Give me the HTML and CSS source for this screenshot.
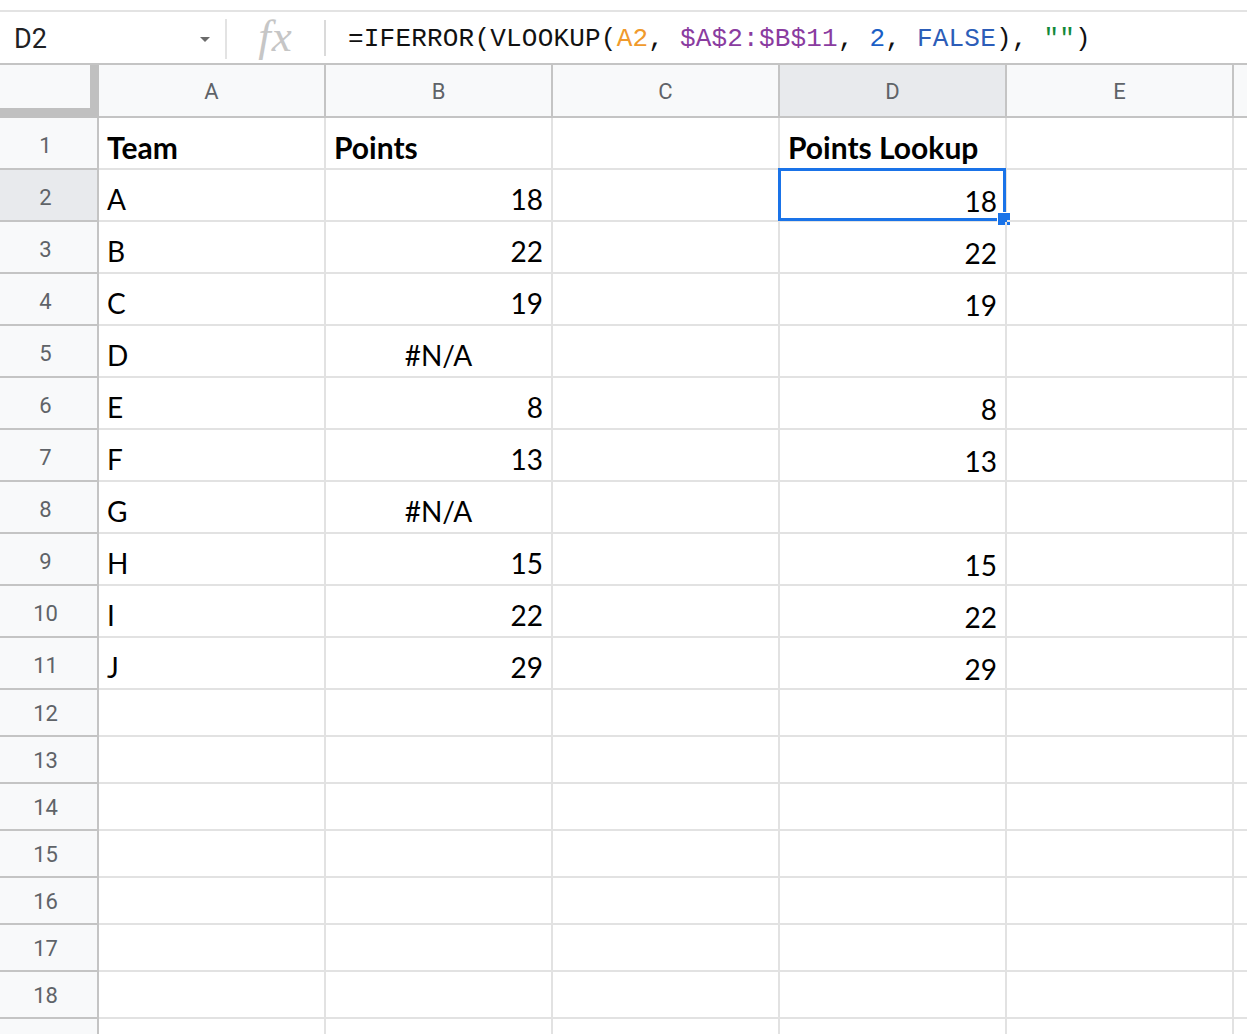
FILE: index.html
```html
<!DOCTYPE html>
<html lang="en">
<head>
  <meta charset="UTF-8" />
  <title>Points Lookup - Sheet</title>
  <link rel="stylesheet" href="styles.css">
</head>
<body>
  <div class="formula-bar">
    <div class="name-box">
      <span class="cell-ref">D2</span>
      <span class="caret"></span>
    </div>
    <div class="fx-box"><span class="fx">fx</span></div>
    <div class="formula">=IFERROR(VLOOKUP(<span class="ref-a">A2</span>, <span class="ref-range">$A$2:$B$11</span>, <span class="num">2</span>, <span class="bool">FALSE</span>), <span class="str">""</span>)</div>
  </div>

  <div class="sheet">
    <div class="corner"></div>
    <div class="col-head">A</div>
    <div class="col-head">B</div>
    <div class="col-head">C</div>
    <div class="col-head selected">D</div>
    <div class="col-head">E</div>
    <div class="col-head last"></div>

    <div class="row-head">1</div>
    <div class="cell bold">Team</div><div class="cell bold">Points</div><div class="cell"></div><div class="cell bold">Points Lookup</div><div class="cell"></div><div class="cell last"></div>

    <div class="row-head selected">2</div>
    <div class="cell">A</div><div class="cell num">18</div><div class="cell"></div>
    <div class="cell num low active">18<span class="sel-box"></span><span class="fill-handle"></span></div>
    <div class="cell"></div><div class="cell last"></div>

    <div class="row-head">3</div>
    <div class="cell">B</div><div class="cell num">22</div><div class="cell"></div><div class="cell num low">22</div><div class="cell"></div><div class="cell last"></div>

    <div class="row-head">4</div>
    <div class="cell">C</div><div class="cell num">19</div><div class="cell"></div><div class="cell num low">19</div><div class="cell"></div><div class="cell last"></div>

    <div class="row-head">5</div>
    <div class="cell">D</div><div class="cell err">#N/A</div><div class="cell"></div><div class="cell"></div><div class="cell"></div><div class="cell last"></div>

    <div class="row-head">6</div>
    <div class="cell">E</div><div class="cell num">8</div><div class="cell"></div><div class="cell num low">8</div><div class="cell"></div><div class="cell last"></div>

    <div class="row-head">7</div>
    <div class="cell">F</div><div class="cell num">13</div><div class="cell"></div><div class="cell num low">13</div><div class="cell"></div><div class="cell last"></div>

    <div class="row-head">8</div>
    <div class="cell">G</div><div class="cell err">#N/A</div><div class="cell"></div><div class="cell"></div><div class="cell"></div><div class="cell last"></div>

    <div class="row-head">9</div>
    <div class="cell">H</div><div class="cell num">15</div><div class="cell"></div><div class="cell num low">15</div><div class="cell"></div><div class="cell last"></div>

    <div class="row-head">10</div>
    <div class="cell">I</div><div class="cell num">22</div><div class="cell"></div><div class="cell num low">22</div><div class="cell"></div><div class="cell last"></div>

    <div class="row-head">11</div>
    <div class="cell">J</div><div class="cell num">29</div><div class="cell"></div><div class="cell num low">29</div><div class="cell"></div><div class="cell last"></div>

    <div class="row-head short">12</div>
    <div class="cell"></div><div class="cell"></div><div class="cell"></div><div class="cell"></div><div class="cell"></div><div class="cell last"></div>

    <div class="row-head short">13</div>
    <div class="cell"></div><div class="cell"></div><div class="cell"></div><div class="cell"></div><div class="cell"></div><div class="cell last"></div>

    <div class="row-head short">14</div>
    <div class="cell"></div><div class="cell"></div><div class="cell"></div><div class="cell"></div><div class="cell"></div><div class="cell last"></div>

    <div class="row-head short">15</div>
    <div class="cell"></div><div class="cell"></div><div class="cell"></div><div class="cell"></div><div class="cell"></div><div class="cell last"></div>

    <div class="row-head short">16</div>
    <div class="cell"></div><div class="cell"></div><div class="cell"></div><div class="cell"></div><div class="cell"></div><div class="cell last"></div>

    <div class="row-head short">17</div>
    <div class="cell"></div><div class="cell"></div><div class="cell"></div><div class="cell"></div><div class="cell"></div><div class="cell last"></div>

    <div class="row-head short">18</div>
    <div class="cell"></div><div class="cell"></div><div class="cell"></div><div class="cell"></div><div class="cell"></div><div class="cell last"></div>

    <div class="row-head short">19</div>
    <div class="cell"></div><div class="cell"></div><div class="cell"></div><div class="cell"></div><div class="cell"></div><div class="cell last"></div>
  </div>
</body>
</html>
```

FILE: styles.css
```css
* { margin: 0; padding: 0; box-sizing: border-box; }
body {
  width: 1247px;
  height: 1034px;
  overflow: hidden;
  background: #fff;
  font-family: Lato, "Open Sans", sans-serif;
  color: #000;
}

/* formula bar */
.formula-bar {
  display: flex;
  align-items: center;
  height: 55px;
  margin-top: 10px;
  border-top: 2px solid #e3e3e3;
  border-bottom: 2px solid #c4c4c4;
}
.name-box {
  width: 227px;
  height: 100%;
  display: flex;
  align-items: center;
  justify-content: space-between;
  padding: 0 17px 0 14px;
  position: relative;
}
.name-box::after {
  content: "";
  position: absolute;
  right: 0;
  top: 7px;
  bottom: 4px;
  width: 2px;
  background: #e3e3e3;
}
.cell-ref {
  font-family: Roboto, "Liberation Sans", sans-serif;
  font-size: 27px;
  color: #202124;
  margin-top: 2px;
}
.caret {
  width: 0;
  height: 0;
  border-left: 5px solid transparent;
  border-right: 5px solid transparent;
  border-top: 5px solid #6b6b6b;
  margin-top: 4px;
}
.fx-box {
  width: 99px;
  height: 36px;
  display: flex;
  align-items: center;
  justify-content: center;
  border-right: 2px solid #dadada;
}
.fx {
  font-family: "Liberation Serif", serif;
  font-style: italic;
  font-size: 45px;
  color: #c6c6c6;
  margin-top: -4px;
  letter-spacing: 1px;
}
.formula {
  padding-left: 22px;
  padding-top: 2px;
  font-family: "Liberation Mono", monospace;
  font-size: 26px;
  letter-spacing: 0.2px;
  color: #111;
  white-space: pre;
}
.ref-a { color: #f09a2c; }
.ref-range { color: #8a3ca0; }
.formula .num { color: #1a5fc6; }
.bool { color: #2c5db8; }
.str { color: #12893a; }

/* grid */
.sheet {
  display: grid;
  grid-template-columns: 99px repeat(5, 227px) 1fr;
  grid-template-rows: 53px repeat(11, 52px) repeat(8, 47px);
}
.corner {
  background: #f8f9fa;
  border-right: 9px solid #c0c0c0;
  border-bottom: 10px solid #c0c0c0;
}
.col-head {
  display: flex;
  align-items: center;
  justify-content: center;
  background: #f8f9fa;
  border-right: 2px solid #c4c4c4;
  border-bottom: 2px solid #c4c4c4;
  font-family: Roboto, "Liberation Sans", sans-serif;
  font-size: 22px;
  color: #5f6368;
  padding-top: 2px;
}
.col-head.selected { background: #e8eaed; }
.row-head {
  display: flex;
  align-items: center;
  justify-content: center;
  background: #f8f9fa;
  border-right: 2px solid #c4c4c4;
  border-bottom: 2px solid #c4c4c4;
  font-family: Roboto, "Liberation Sans", sans-serif;
  font-size: 22px;
  color: #5f6368;
  padding: 4px 6px 0 0;
}
.row-head.short { padding-top: 2px; }
.row-head.selected { background: #e8eaed; }
.cell {
  position: relative;
  display: flex;
  align-items: flex-end;
  padding: 0 8px 5px 8px;
  border-right: 2px solid #e2e2e2;
  border-bottom: 2px solid #e2e2e2;
  font-size: 28px;
  line-height: 32px;
  white-space: nowrap;
}
.cell.bold { font-weight: bold; font-size: 30px; }
.cell.num { justify-content: flex-end; }
.cell.err { justify-content: center; }
.cell.low { padding-bottom: 3px; }
.sel-box {
  position: absolute;
  left: -2px;
  top: -2px;
  right: -1px;
  bottom: -1px;
  border: 3px solid #1a73e8;
}
.fill-handle {
  position: absolute;
  right: -6px;
  bottom: -6px;
  width: 14px;
  height: 14px;
  background: #1a73e8;
  border: 1px solid #fff;
}
```
